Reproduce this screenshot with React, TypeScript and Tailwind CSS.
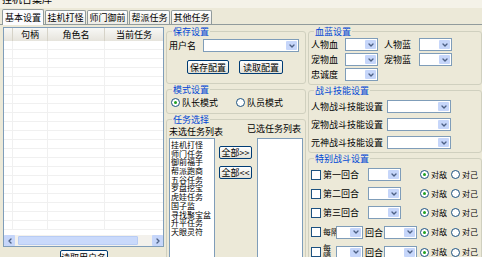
import { ChevronDown, ChevronLeft, ChevronRight } from 'lucide-react';

const font = { fontFamily: '"Noto Sans CJK SC", "Noto Sans", sans-serif' };

function Combo({ className }: { className: string }) {
  return (
    <div className={`flex h-[13px] shrink-0 items-stretch border border-[#7F9DB9] bg-white ${className}`}>
      <div className="flex-1" />
      <div className="m-px flex w-[11px] items-center justify-center rounded-[1px] bg-[#C6D6FA]">
        <ChevronDown className="h-[8px] w-[8px] text-[#4D6185]" strokeWidth={4} />
      </div>
    </div>
  );
}

function Btn({ label, className }: { label: string; className: string }) {
  return (
    <div
      className={`flex shrink-0 items-center justify-center whitespace-nowrap rounded-[2px] border border-[#003C74] bg-gradient-to-b from-white to-[#E3E1D7] text-[9px] leading-none text-black ${className}`}
    >
      {label}
    </div>
  );
}

function Radio({ on, label, small }: { on?: boolean; label: string; small?: boolean }) {
  return (
    <div className={`flex shrink-0 items-center gap-[2px] whitespace-nowrap leading-none ${small ? 'text-[8px]' : 'text-[9px]'}`}>
      <span className="flex h-[9px] w-[9px] shrink-0 items-center justify-center rounded-full border border-[#1C5180] bg-white">
        {on && <span className="h-[3px] w-[3px] rounded-full bg-[#21A121]" />}
      </span>
      {label}
    </div>
  );
}

function Check() {
  return <span className="block h-[10px] w-[10px] border border-[#1C5180] bg-white" />;
}

function Group({ title, className, children }: { title: string; className: string; children: React.ReactNode }) {
  return (
    <fieldset className={`min-w-0 rounded-[3px] border border-[#D0D0BF] px-[2px] ${className}`}>
      <legend className="ml-[3px] px-[1px] text-[9px] leading-[9px] text-[#0046D5]">{title}</legend>
      {children}
    </fieldset>
  );
}

const tabs = ['基本设置', '挂机打怪', '师门御前', '帮派任务', '其他任务'];
const tasks = ['挂机打怪', '师门任务', '御前福手', '帮派跑商', '五谷任务', '罗盘挖宝', '虎娃任务', '国子监', '寻找聚宝盆', '升平任务', '天眼灵符'];

function Target() {
  return (
    <div className="flex gap-[4px]">
      <Radio small on label="对敌" />
      <Radio small label="对己" />
    </div>
  );
}

function SpecialRow({ label }: { label: string }) {
  return (
    <div className="grid h-[19px] grid-cols-[12px_45px_33px_19px_auto] items-center overflow-hidden">
      <Check />
      <span className="whitespace-nowrap text-[9px] leading-none">{label}</span>
      <Combo className="w-[33px]" />
      <span />
      <Target />
    </div>
  );
}

function EveryRow({ tall }: { tall?: boolean }) {
  return (
    <div className="grid h-[20px] grid-cols-[12px_13px_27px_21px_33px_3px_auto] items-center overflow-hidden">
      <Check />
      <span className={`text-[8px] ${tall ? 'leading-[8px]' : 'whitespace-nowrap leading-none'}`}>
        {tall ? (
          <>
            每<br />隔
          </>
        ) : (
          '每隔'
        )}
      </span>
      <Combo className="w-[27px]" />
      <span className="pl-[2px] whitespace-nowrap text-[9px] leading-none">回合</span>
      <Combo className="w-[33px]" />
      <span />
      <Target />
    </div>
  );
}

export default function App() {
  return (
    <div style={font} className="flex h-[257px] w-[482px] flex-col overflow-hidden bg-[#ECE9D8] text-black">
      <div className="h-[8px] shrink-0 overflow-hidden bg-[#F4F2E8] pl-[2px]">
        <div className="-mt-[7px] text-[10px] leading-[12px]">挂机合集库</div>
      </div>
      <div className="flex h-[16px] shrink-0 items-end pl-[2px]">
        {tabs.map((t, i) => (
          <div
            key={t}
            className={
              i === 0
                ? 'z-10 -mb-px flex h-[16px] w-[42px] items-center justify-center whitespace-nowrap rounded-t-[2px] border border-b-0 border-[#919B9C] bg-[#FCFCFE] text-[9px] leading-none'
                : 'ml-[1px] flex h-[14px] w-[41px] items-center justify-center whitespace-nowrap rounded-t-[2px] border border-b-0 border-[#919B9C] bg-gradient-to-b from-white to-[#ECEBE6] text-[9px] leading-none'
            }
          >
            {t}
          </div>
        ))}
      </div>
      <div className="flex flex-1 gap-[2px] border-t border-[#919B9C] pl-[3px] pt-[2px]">
        {/* left list */}
        <div className="flex w-[161px] shrink-0 flex-col">
          <div className="flex h-[220px] flex-col border border-[#7F9DB9] bg-white">
            <div className="flex h-[13px] bg-gradient-to-b from-[#F8F8F6] to-[#E6E4DC] text-[9px] leading-[13px]">
              <div className="w-[9px] border-r border-[#D6D3C8]" />
              <div className="w-[35px] border-r border-[#D6D3C8] text-center">句柄</div>
              <div className="w-[57px] border-r border-[#D6D3C8] text-center">角色名</div>
              <div className="flex-1 text-center">当前任务</div>
            </div>
            <div className="flex-1 overflow-hidden">
              {Array.from({ length: 21 }).map((_, i) => (
                <div key={i} className="flex h-[9px] border-b border-[#F0F0F0]">
                  <div className="w-[9px] border-r border-[#F0F0F0]" />
                  <div className="w-[35px] border-r border-[#F0F0F0]" />
                  <div className="w-[57px] border-r border-[#F0F0F0]" />
                </div>
              ))}
            </div>
            <div className="flex h-[11px] items-stretch bg-[#F3F1EC]">
              <div className="flex w-[11px] items-center justify-center rounded-[1px] bg-[#C6D6FA]">
                <ChevronLeft className="h-[8px] w-[8px] text-[#4D6185]" strokeWidth={4} />
              </div>
              <div className="mx-[3px] my-px w-[120px] rounded-[1px] border border-[#B8CCF4] bg-[#C9D9FB]" />
              <div className="flex-1" />
              <div className="flex w-[11px] items-center justify-center rounded-[1px] bg-[#C6D6FA]">
                <ChevronRight className="h-[8px] w-[8px] text-[#4D6185]" strokeWidth={4} />
              </div>
            </div>
          </div>
          <div className="mt-[3px] flex justify-center">
            <Btn label="读取用户名" className="h-[14px] w-[48px]" />
          </div>
        </div>

        {/* middle */}
        <div className="flex w-[140px] shrink-0 flex-col gap-[1px]">
          <Group title="保存设置" className="h-[57px]">
            <div className="mt-[3px] flex items-center">
              <span className="w-[34px] shrink-0 text-[9px] leading-none">用户名</span>
              <Combo className="w-[96px]" />
            </div>
            <div className="mt-[8px] flex gap-[10px] pl-[18px]">
              <Btn label="保存配置" className="h-[14px] w-[42px]" />
              <Btn label="读取配置" className="h-[14px] w-[44px]" />
            </div>
          </Group>
          <Group title="模式设置" className="h-[29px]">
            <div className="mt-[4px] flex gap-[18px] pl-[2px]">
              <Radio on label="队长模式" />
              <Radio label="队员模式" />
            </div>
          </Group>
          <Group title="任务选择" className="flex-1">
            <div className="flex gap-[4px]">
              <div className="flex w-[46px] shrink-0 flex-col">
                <div className="mt-[3px] w-[70px] whitespace-nowrap text-[9px] leading-[9px]">未选任务列表</div>
                <div className="mt-[2px] h-[120px] overflow-hidden border border-[#7F9DB9] bg-white px-[1px] pt-[2px] text-[8px]">
                  {tasks.map((t) => (
                    <div key={t} className="h-[8.7px] whitespace-nowrap leading-[8.7px]">{t}</div>
                  ))}
                </div>
              </div>
              <div className="flex w-[34px] shrink-0 flex-col gap-[7px] pt-[22px]">
                <Btn label="全部>>" className="h-[13px] w-[33px]" />
                <Btn label="全部<<" className="h-[13px] w-[33px]" />
              </div>
              <div className="flex w-[46px] shrink-0 flex-col">
                <div className="-ml-[10px] w-[70px] whitespace-nowrap text-[9px] leading-[9px]">已选任务列表</div>
                <div className="mt-[5px] h-[120px] border border-[#7F9DB9] bg-white" />
              </div>
            </div>
          </Group>
        </div>

        {/* right */}
        <div className="flex min-w-0 flex-1 flex-col gap-[1px]">
          <Group title="血蓝设置" className="h-[58px]">
            <div className="flex flex-col gap-[2px] pt-[2px]">
              <div className="flex items-center">
                <span className="w-[34px] shrink-0 text-[9px] leading-none">人物血</span>
                <Combo className="w-[33px]" />
                <span className="ml-[6px] w-[35px] shrink-0 text-[9px] leading-none">人物蓝</span>
                <Combo className="w-[33px]" />
              </div>
              <div className="flex items-center">
                <span className="w-[34px] shrink-0 text-[9px] leading-none">宠物血</span>
                <Combo className="w-[33px]" />
                <span className="ml-[6px] w-[35px] shrink-0 text-[9px] leading-none">宠物蓝</span>
                <Combo className="w-[33px]" />
              </div>
              <div className="flex items-center">
                <span className="w-[34px] shrink-0 text-[9px] leading-none">忠诚度</span>
                <Combo className="w-[33px]" />
              </div>
            </div>
          </Group>
          <Group title="战斗技能设置" className="h-[67px]">
            <div className="flex flex-col gap-[5px] pt-[5px]">
              {['人物战斗技能设置', '宠物战斗技能设置', '元神战斗技能设置'].map((l) => (
                <div key={l} className="flex items-center">
                  <span className="w-[76px] shrink-0 whitespace-nowrap text-[9px] leading-none">{l}</span>
                  <Combo className="w-[64px]" />
                </div>
              ))}
            </div>
          </Group>
          <Group title="特别战斗设置" className="flex-1">
            <div className="flex flex-col pt-[2px]">
              <SpecialRow label="第一回合" />
              <SpecialRow label="第二回合" />
              <SpecialRow label="第三回合" />
              <EveryRow />
              <EveryRow tall />
            </div>
          </Group>
        </div>
      </div>
    </div>
  );
}
